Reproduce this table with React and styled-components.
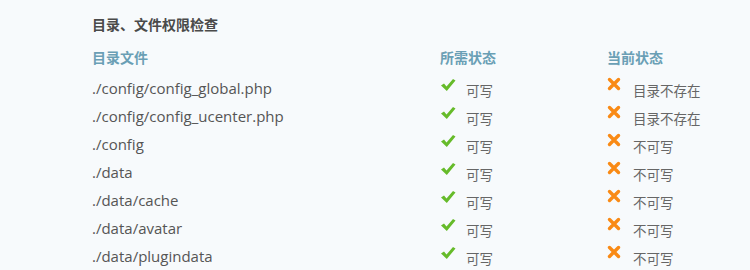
import React from 'react';
import styled, { createGlobalStyle } from 'styled-components';

const GlobalStyle = createGlobalStyle`
  html, body {
    margin: 0;
    background: #f7fafc;
  }
`;

const Page = styled.div`
  width: 750px;
  height: 270px;
  box-sizing: border-box;
  padding: 15px 0 0 92px;
  background: #f7fafc;
  font-family: "Liberation Sans", "Noto Sans CJK SC", sans-serif;
  overflow: hidden;
`;

const Title = styled.h3`
  margin: 0;
  height: 20px;
  line-height: 20px;
  font-size: 14px;
  font-weight: bold;
  color: #4a4a4a;
`;

const Table = styled.div`
  display: grid;
  grid-template-columns: 348px 167px 1fr;
  margin-top: 11px;
`;

const Head = styled.div`
  height: 28px;
  line-height: 24px;
  font-size: 14px;
  font-weight: bold;
  color: #6a9fb5;
`;

const Cell = styled.div`
  height: 28px;
  display: flex;
  align-items: center;
  font-size: 14px;
  color: #555;
`;

const Path = styled.span`
  font-family: "Open Sans", "Noto Sans CJK SC", sans-serif;
  font-size: 15px;
  color: #555;
`;

const StatusText = styled.span`
  font-size: 13.5px;
  color: #666;
  margin-top: 3px;
  margin-left: ${p => p.$gap}px;
`;

const Check = () => (
  <svg width="16" height="14" viewBox="0 0 16 14" style={{ marginTop: -6 }}>
    <path d="M1 7.5 L4 5.5 L6.5 8.5 L13 1 L15.5 2.5 L6.8 13 Z" fill="#66bb2a" />
  </svg>
);

const Cross = () => (
  <svg width="14" height="14" viewBox="0 0 14 14" style={{ marginTop: -8 }}>
    <path d="M2.5 2.5 L11.5 11.5 M11.5 2.5 L2.5 11.5" stroke="#f98a15" strokeWidth="3.4" strokeLinecap="round" />
  </svg>
);

const rows = [
  ['./config/config_global.php', '目录不存在'],
  ['./config/config_ucenter.php', '目录不存在'],
  ['./config', '不可写'],
  ['./data', '不可写'],
  ['./data/cache', '不可写'],
  ['./data/avatar', '不可写'],
  ['./data/plugindata', '不可写'],
];

export default function App() {
  return (
    <>
      <GlobalStyle />
      <Page>
        <Title>目录、文件权限检查</Title>
        <Table>
          <Head>目录文件</Head>
          <Head>所需状态</Head>
          <Head>当前状态</Head>
          {rows.map(([path, current]) => (
            <React.Fragment key={path}>
              <Cell><Path>{path}</Path></Cell>
              <Cell>
                <Check />
                <StatusText $gap={10}>可写</StatusText>
              </Cell>
              <Cell>
                <Cross />
                <StatusText $gap={12}>{current}</StatusText>
              </Cell>
            </React.Fragment>
          ))}
        </Table>
      </Page>
    </>
  );
}
